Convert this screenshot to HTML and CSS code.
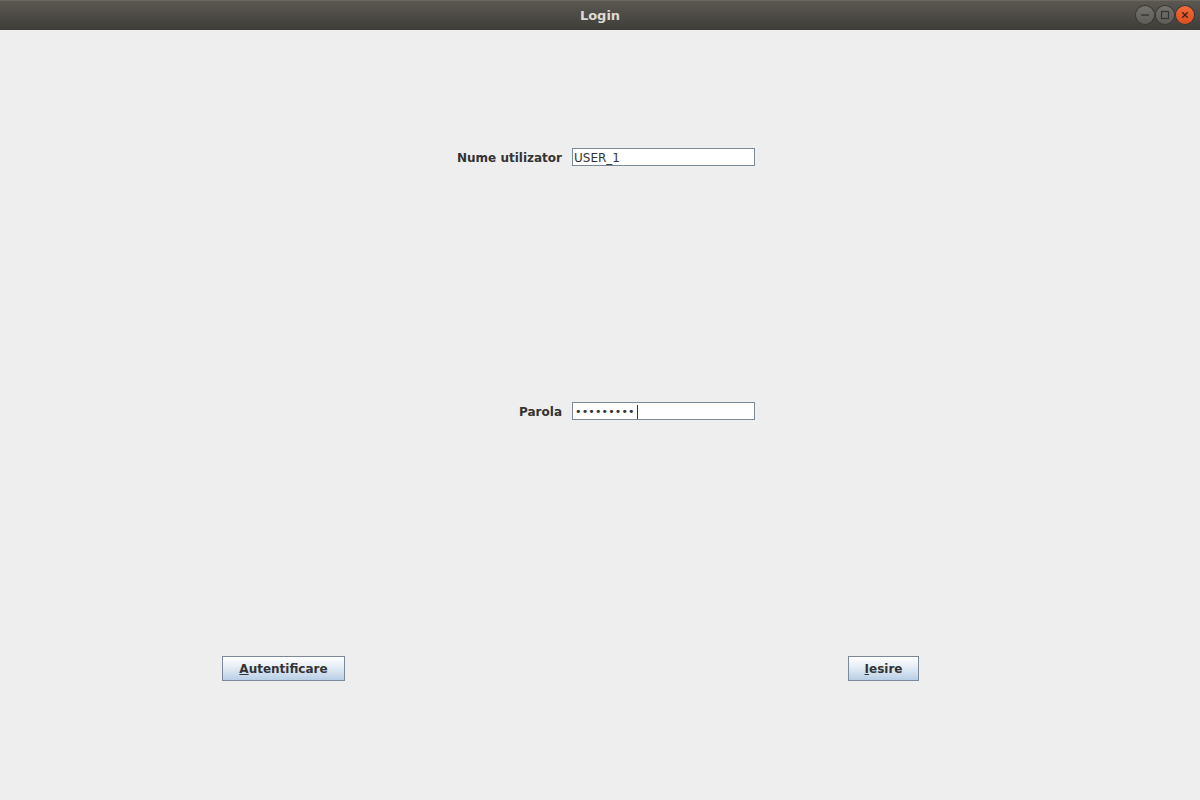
FILE: index.html
```html
<!DOCTYPE html>
<html>

<head>
    <title>Login</title>
    <meta charset="utf-8">
    <link rel="stylesheet" href="styles.css">
</head>

<body>
    <div class="window">
        <div class="titlebar">
            <span class="title">Login</span>
            <div class="win-buttons">
                <span class="win-btn">
                    <svg width="18" height="18" viewBox="0 0 18 18"><line x1="5" y1="9" x2="13" y2="9" stroke="#34332f" stroke-width="1.3"/></svg>
                </span>
                <span class="win-btn">
                    <svg width="18" height="18" viewBox="0 0 18 18"><rect x="5.5" y="5.5" width="7" height="7" fill="none" stroke="#34332f" stroke-width="1.2"/></svg>
                </span>
                <span class="win-btn close">
                    <svg width="18" height="18" viewBox="0 0 18 18"><path d="M6.2 6.2 L11.8 11.8 M11.8 6.2 L6.2 11.8" stroke="#3b2219" stroke-width="1.3"/></svg>
                </span>
            </div>
        </div>

        <div class="content">
            <div class="form-row">
                <label for="user">Nume utilizator</label>
                <div class="field" id="user">USER_1</div>
            </div>

            <div class="form-row">
                <label for="pass">Parola</label>
                <div class="field password" id="pass"><span class="dots">•••••••••</span><span class="caret"></span></div>
            </div>

            <div class="button-row">
                <button><u>A</u>utentificare</button>
                <button><u>I</u>esire</button>
            </div>
        </div>
    </div>
</body>

</html>
```

FILE: styles.css
```css
body {
    margin: 0;
    background-color: #eeeeee;
    font-family: "DejaVu Sans", sans-serif;
}

.window {
    width: 1200px;
    height: 800px;
    display: flex;
    flex-direction: column;
}

.titlebar {
    height: 30px;
    position: relative;
    display: flex;
    align-items: center;
    justify-content: center;
    background: linear-gradient(#5b5852, #3f3d39);
    border-top: 1px solid #6b6861;
    box-sizing: border-box;
}

.title {
    color: #dfdbd2;
    font-weight: bold;
    font-size: 13px;
}

.win-buttons {
    position: absolute;
    right: 6px;
    top: 5px;
    display: flex;
    gap: 2px;
}

.win-btn {
    width: 18px;
    height: 18px;
    border-radius: 50%;
    background: linear-gradient(#75736d, #5e5c57);
    box-shadow: 0 0 0 1px #3a3834;
    display: flex;
}

.win-btn.close {
    background: linear-gradient(#f26a3b, #de4e1d);
}

.content {
    flex: 1;
    padding-top: 118px;
    display: flex;
    flex-direction: column;
    gap: 236px;
}

.form-row {
    display: grid;
    grid-template-columns: 562px 183px;
    column-gap: 10px;
    height: 18px;
}

label {
    justify-self: end;
    align-self: center;
    padding-top: 2px;
    font-size: 12px;
    font-weight: bold;
    color: #333333;
}

.field {
    box-sizing: border-box;
    height: 18px;
    border: 1px solid #7a8a99;
    background-color: white;
    font-size: 12px;
    color: #333333;
    padding: 1px 1px 0;
    line-height: 16px;
    display: flex;
    align-items: center;
}

.password .dots {
    letter-spacing: 0.15px;
    font-size: 11px;
    padding-left: 1px;
}

.caret {
    width: 1px;
    height: 14px;
    background-color: #333333;
    margin-left: 2px;
}

.button-row {
    display: flex;
    justify-content: space-between;
    padding: 0 281px 0 222px;
}

button {
    height: 25px;
    padding: 0 15px;
    border: 1px solid #7a8a99;
    background: linear-gradient(#ffffff, #e8eff7 40%, #b8cfe5);
    font-family: "DejaVu Sans", sans-serif;
    font-size: 12px;
    font-weight: bold;
    color: #333333;
}

button:first-child {
    width: 123px;
}

button:last-child {
    width: 71px;
}
```
